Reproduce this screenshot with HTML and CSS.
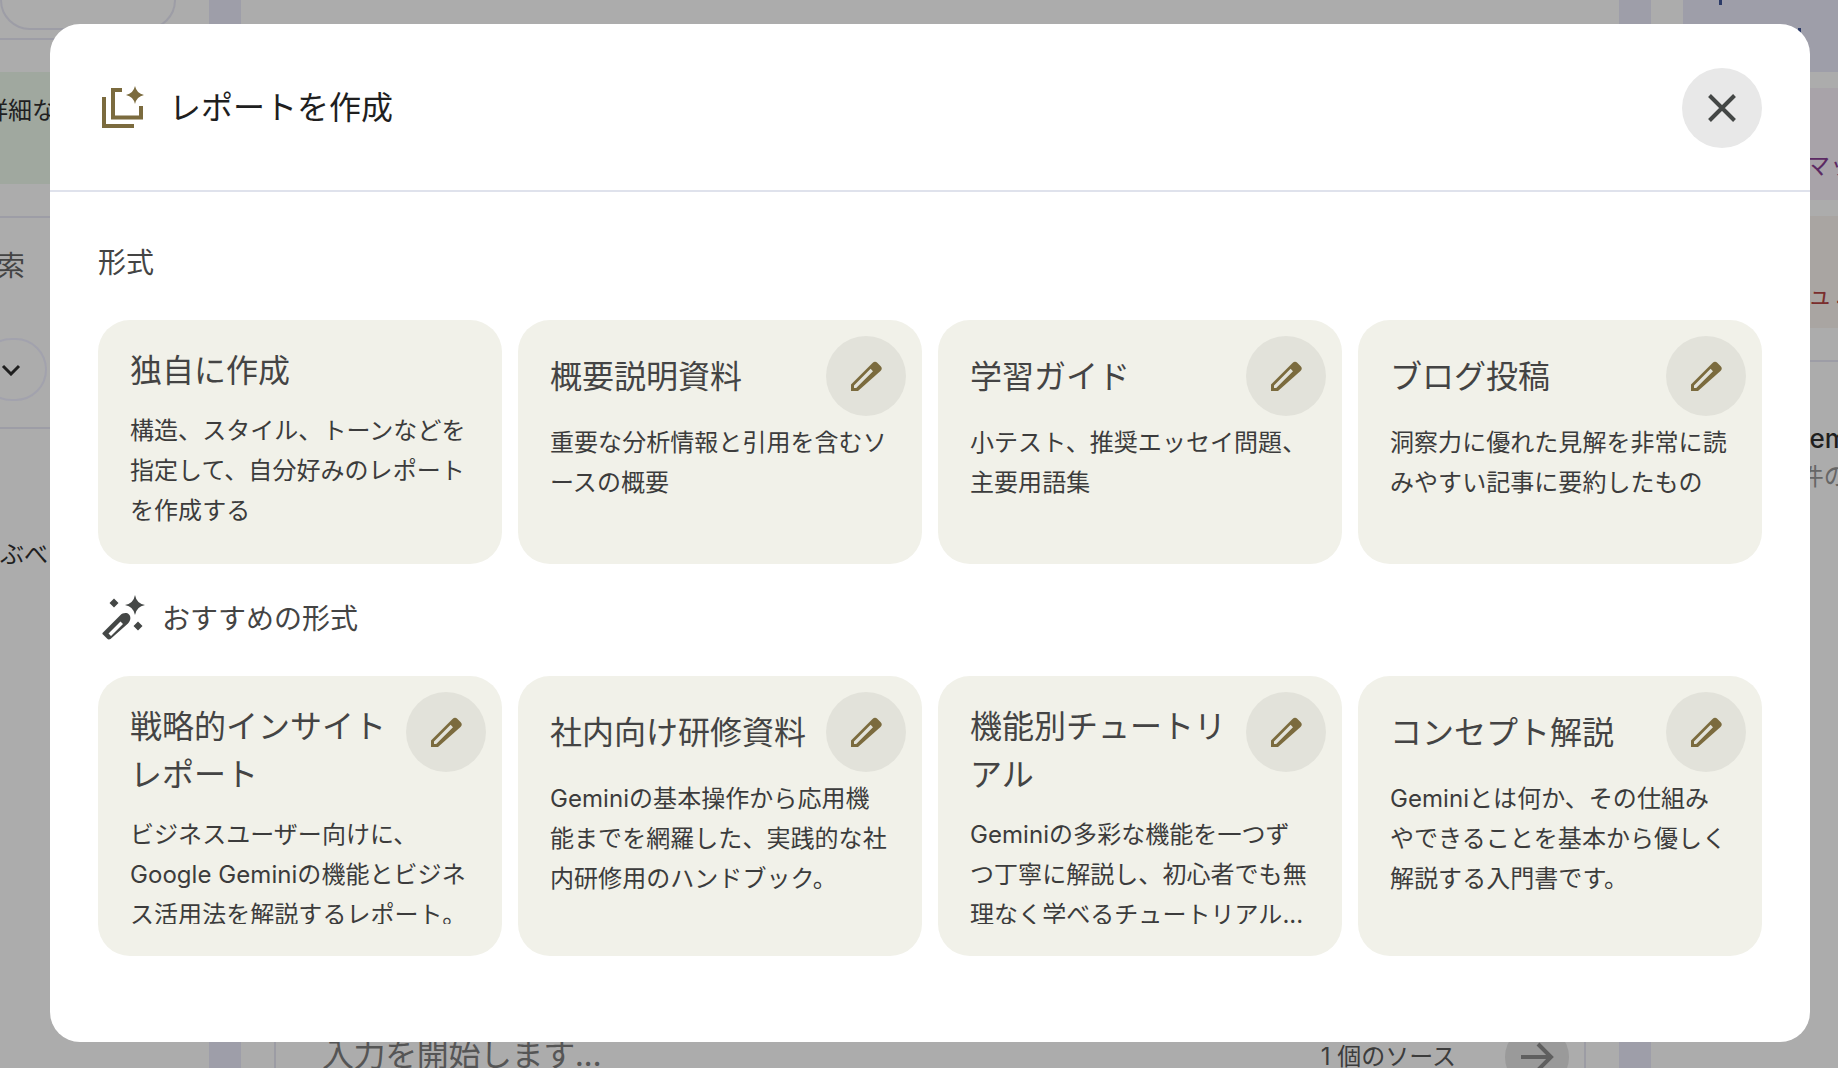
FILE: index.html
```html
<!DOCTYPE html>
<html lang="ja">
<head>
    <meta charset="UTF-8">
    <meta name="viewport" content="width=device-width, initial-scale=1.0">
    <title>レポートを作成</title>
    <link rel="stylesheet" href="styles.css">
</head>
<body>
    <svg class="icon-defs" width="0" height="0">
        <symbol id="pencil" viewBox="0 0 48 48">
            <path fill-rule="evenodd" d="M9 39v-6.5L30.5 11a3.5 3.5 0 0 1 5 0l3 3a3.5 3.5 0 0 1 0 5L16 39zM12 36h2.2L31 19.2 28.6 16.8 12 33.6z"/>
        </symbol>
    </svg>

    <!-- 背景のアプリ画面 -->
    <div class="app">
        <div class="left-panel">
            <div class="source-top"><div class="source-box"></div></div>
            <div class="note-card">詳細な情報</div>
            <div class="search-row">検索</div>
            <div class="chip-row">
                <div class="chip">
                    <svg width="20" height="12" viewBox="0 0 20 12"><path d="M2 2l8 8 8-8" fill="none" stroke="#1f1f1f" stroke-width="3"/></svg>
                </div>
            </div>
            <div class="source-name">ぶべ</div>
        </div>
        <div class="gutter"></div>
        <div class="chat-panel">
            <div class="composer">
                <span class="composer-input">入力を開始します...</span>
                <span class="composer-count">1 個のソース</span>
                <span class="composer-send">
                    <svg width="34" height="30" viewBox="0 0 34 30"><path d="M1 15h30M18 2l13 13-13 13" fill="none" stroke="#5f5f5f" stroke-width="4"/></svg>
                </span>
            </div>
        </div>
        <div class="gutter"></div>
        <div class="studio-panel">
            <div class="studio-header"><span class="tick"></span><span class="tick tick-low"></span></div>
            <div class="tool-card tool-purple">マップ</div>
            <div class="tool-card tool-brown">ュニ</div>
            <div class="note-item">
                <div class="note-title">Gem</div>
                <div class="note-sub">1件の</div>
            </div>
        </div>
    </div>

    <!-- レポート作成ダイアログ -->
    <div class="modal">
        <div class="modal-header">
            <svg class="header-icon" width="48" height="48" viewBox="0 0 48 48">
                <path d="M23 6H14V33.5H42V22M5 13V42H35" fill="none" stroke="#7b6b3e" stroke-width="4"/>
                <path d="M36 2Q37.6 9.4 45 11 37.6 12.6 36 20 34.4 12.6 27 11 34.4 9.4 36 2z" fill="#7b6b3e"/>
            </svg>
            <h2 class="modal-title">レポートを作成</h2>
            <button class="close-button" type="button">
                <svg width="28" height="28" viewBox="0 0 28 28"><path d="M1.5 1.5l25 25M26.5 1.5l-25 25" fill="none" stroke="#444746" stroke-width="4"/></svg>
            </button>
        </div>
        <div class="modal-body">
            <div class="section-label">形式</div>
            <div class="card-grid grid-first">
                <div class="card">
                    <div class="card-title">独自に作成</div>
                    <div class="card-text">構造、スタイル、トーンなどを指定して、自分好みのレポートを作成する</div>
                </div>
                <div class="card editable">
                    <div class="card-title">概要説明資料</div>
                    <div class="card-text">重要な分析情報と引用を含むソースの概要</div>
                    <button class="edit-button" type="button"><svg width="48" height="48"><use href="#pencil"/></svg></button>
                </div>
                <div class="card editable">
                    <div class="card-title">学習ガイド</div>
                    <div class="card-text">小テスト、推奨エッセイ問題、主要用語集</div>
                    <button class="edit-button" type="button"><svg width="48" height="48"><use href="#pencil"/></svg></button>
                </div>
                <div class="card editable">
                    <div class="card-title">ブログ投稿</div>
                    <div class="card-text">洞察力に優れた見解を非常に読みやすい記事に要約したもの</div>
                    <button class="edit-button" type="button"><svg width="48" height="48"><use href="#pencil"/></svg></button>
                </div>
            </div>
            <div class="section-label suggest-label">
                <svg width="48" height="48" viewBox="0 0 48 48">
                    <path fill="#444746" fill-rule="evenodd" d="M3.5 40L21 22.5C24 19.5 28 19.5 30 21.5 32 23.5 32 27.5 29 30.500L11.500 46Q9.500 47 8 45.500L4 41.500Q3 41 3.500 40zM9.500 40.500L12 43 24 31 21.500 28.500z"/>
                    <path fill="#444746" d="M36 2Q37.500 10.500 46 12 37.500 13.500 36 22 34.500 13.500 26 12 34.500 10.500 36 2zM15 5.500L19.500 10 15 14.500 10.500 10zM39 28.500L43.500 33 39 37.500 34.500 33z"/>
                </svg>
                <span>おすすめの形式</span>
            </div>
            <div class="card-grid grid-second">
                <div class="card editable">
                    <div class="card-title">戦略的インサイトレポート</div>
                    <div class="card-text">ビジネスユーザー向けに、Google Geminiの機能とビジネス活用法を解説するレポート。</div>
                    <button class="edit-button" type="button"><svg width="48" height="48"><use href="#pencil"/></svg></button>
                </div>
                <div class="card editable">
                    <div class="card-title">社内向け研修資料</div>
                    <div class="card-text">Geminiの基本操作から応用機能までを網羅した、実践的な社内研修用のハンドブック。</div>
                    <button class="edit-button" type="button"><svg width="48" height="48"><use href="#pencil"/></svg></button>
                </div>
                <div class="card editable">
                    <div class="card-title">機能別チュートリアル</div>
                    <div class="card-text">Geminiの多彩な機能を一つずつ丁寧に解説し、初心者でも無理なく学べるチュートリアル...</div>
                    <button class="edit-button" type="button"><svg width="48" height="48"><use href="#pencil"/></svg></button>
                </div>
                <div class="card editable">
                    <div class="card-title">コンセプト解説</div>
                    <div class="card-text">Geminiとは何か、その仕組みやできることを基本から優しく解説する入門書です。</div>
                    <button class="edit-button" type="button"><svg width="48" height="48"><use href="#pencil"/></svg></button>
                </div>
            </div>
        </div>
    </div>
</body>
</html>
```
FILE: styles.css
```css
* {
    box-sizing: border-box;
}
html, body {
    height: 100%;
}
body {
    margin: 0;
    overflow: hidden;
    background-color: #acacac;
    font-family: Inter, "Noto Sans CJK JP", sans-serif;
    color: #1f1f1f;
}
.icon-defs {
    display: block;
    height: 0;
}
button {
    border: none;
    padding: 0;
    cursor: pointer;
}

/* 背景 */
.app {
    display: flex;
    height: 1068px;
    overflow: hidden;
}
.left-panel {
    width: 209px;
    flex-shrink: 0;
    overflow: hidden;
}
.gutter {
    width: 32px;
    flex-shrink: 0;
    background-color: #9e9ea9;
}
.source-top {
    height: 40px;
    border-bottom: 2px solid #9d9da6;
    overflow: hidden;
}
.source-box {
    width: 176px;
    height: 70px;
    margin-top: -40px;
    border: 2px solid #9d9da6;
    border-radius: 30px;
}
.note-card {
    height: 112px;
    margin-top: 32px;
    padding-top: 21px;
    text-indent: -16px;
    background-color: #a0a89f;
    font-size: 24px;
    line-height: 36px;
    white-space: nowrap;
}
.search-row {
    height: 72px;
    margin-top: 32px;
    border-top: 2px solid #9d9da6;
    padding-top: 28px;
    text-indent: -31px;
    font-size: 28px;
    line-height: 40px;
    color: #444;
}
.chip-row {
    height: 91px;
    margin-top: 50px;
    border-bottom: 2px solid #9d9da6;
}
.chip {
    display: flex;
    align-items: center;
    width: 67px;
    height: 63px;
    margin-left: -20px;
    padding-left: 19px;
    border: 2px solid #a2a2ad;
    border-radius: 32px;
}
.source-name {
    margin-top: 108px;
    font-size: 24px;
    line-height: 36px;
    white-space: nowrap;
}
.chat-panel {
    flex: 1;
    min-width: 0;
}
.composer {
    display: flex;
    align-items: center;
    height: 114px;
    margin: 1000px 33px 0;
    padding: 0 15px 0 46px;
    border-left: 2px solid #9c9ca4;
    border-right: 2px solid #9c9ca4;
}
.composer-input {
    flex: 1;
    font-size: 32px;
    line-height: 40px;
    letter-spacing: -0.4px;
    margin-top: -4px;
    color: #555;
}
.composer-count {
    margin-right: 49px;
    font-size: 24px;
    color: #3c3c3c;
    margin-top: -6px;
}
.composer-send {
    display: flex;
    align-items: center;
    justify-content: center;
    width: 64px;
    height: 64px;
    border-radius: 50%;
    background-color: #9a9a9a;
}
.studio-panel {
    width: 187px;
    flex-shrink: 0;
    padding-left: 32px;
    overflow: hidden;
}
.studio-header {
    display: flex;
    align-items: flex-start;
    height: 72px;
    margin-bottom: 16px;
    padding-left: 36px;
    background-color: #9e9ea9;
}
.tick {
    width: 3px;
    height: 5px;
    background-color: #2b3a67;
}
.tick-low {
    margin-top: 28px;
    margin-left: 76px;
}
.tool-card {
    height: 112px;
    width: 200px;
    margin-bottom: 16px;
    padding-left: 123px;
    padding-top: 60px;
    font-size: 24px;
    line-height: 36px;
    white-space: nowrap;
}
.tool-purple {
    background-color: #a8a3a9;
    color: #5c2a63;
}
.tool-brown {
    background-color: #a9a5a2;
    padding-top: 62px;
    padding-left: 125px;
    letter-spacing: 3px;
    color: #7a2e2e;
}
.note-item {
    margin-top: 32px;
    padding-left: 107px;
    padding-top: 57px;
    border-top: 2px solid #9d9da6;
    width: 200px;
    white-space: nowrap;
}
.note-title {
    font-size: 26px;
    font-weight: 500;
    line-height: 40px;
}
.note-sub {
    font-size: 24px;
    line-height: 36px;
    color: #666;
}

/* ダイアログ */
.modal {
    position: fixed;
    top: 24px;
    left: 50px;
    width: 1760px;
    height: 1018px;
    background: white;
    border-radius: 30px;
    overflow: hidden;
}
.modal-header {
    display: flex;
    align-items: center;
    height: 168px;
    padding: 2px 48px 0 49px;
    border-bottom: 2px solid #dfe2ec;
}
.header-icon {
    flex-shrink: 0;
}
.modal-title {
    flex: 1;
    margin: 0 0 0 22px;
    font-size: 32px;
    font-weight: 400;
    line-height: 48px;
}
.close-button {
    display: flex;
    align-items: center;
    justify-content: center;
    width: 80px;
    height: 80px;
    border-radius: 50%;
    background-color: #e8e8e8;
}
.modal-body {
    padding: 0 48px;
}
.section-label {
    display: flex;
    align-items: center;
    height: 40px;
    margin-top: 49px;
    margin-bottom: 39px;
    font-size: 28px;
    color: #444;
}
.suggest-label {
    height: 48px;
    margin-top: 29px;
    margin-bottom: 35px;
    padding-left: 1px;
    gap: 15px;
}
.card-grid {
    display: grid;
    grid-template-columns: repeat(4, 404px);
    gap: 16px;
}
.grid-first {
    grid-auto-rows: 244px;
}
.grid-second {
    grid-auto-rows: 280px;
}
.card {
    position: relative;
    display: flex;
    flex-direction: column;
    padding: 27px 32px 32px;
    background-color: #f1f1e9;
    border-radius: 32px;
    overflow: hidden;
}
.card-title {
    flex-shrink: 0;
    margin-bottom: 16px;
    font-size: 32px;
    line-height: 48px;
    color: #444;
}
.editable .card-title {
    display: flex;
    align-items: center;
    min-height: 60px;
    padding-right: 64px;
}
.card-text {
    flex: 1;
    min-height: 0;
    overflow: hidden;
    font-size: 24px;
    line-height: 40px;
    letter-spacing: 0.05px;
    color: #3c3c3c;
}
.edit-button {
    position: absolute;
    top: 16px;
    right: 16px;
    display: flex;
    align-items: center;
    justify-content: center;
    width: 80px;
    height: 80px;
    border-radius: 50%;
    background-color: #e2e2da;
    fill: #7b6b3e;
}
```
